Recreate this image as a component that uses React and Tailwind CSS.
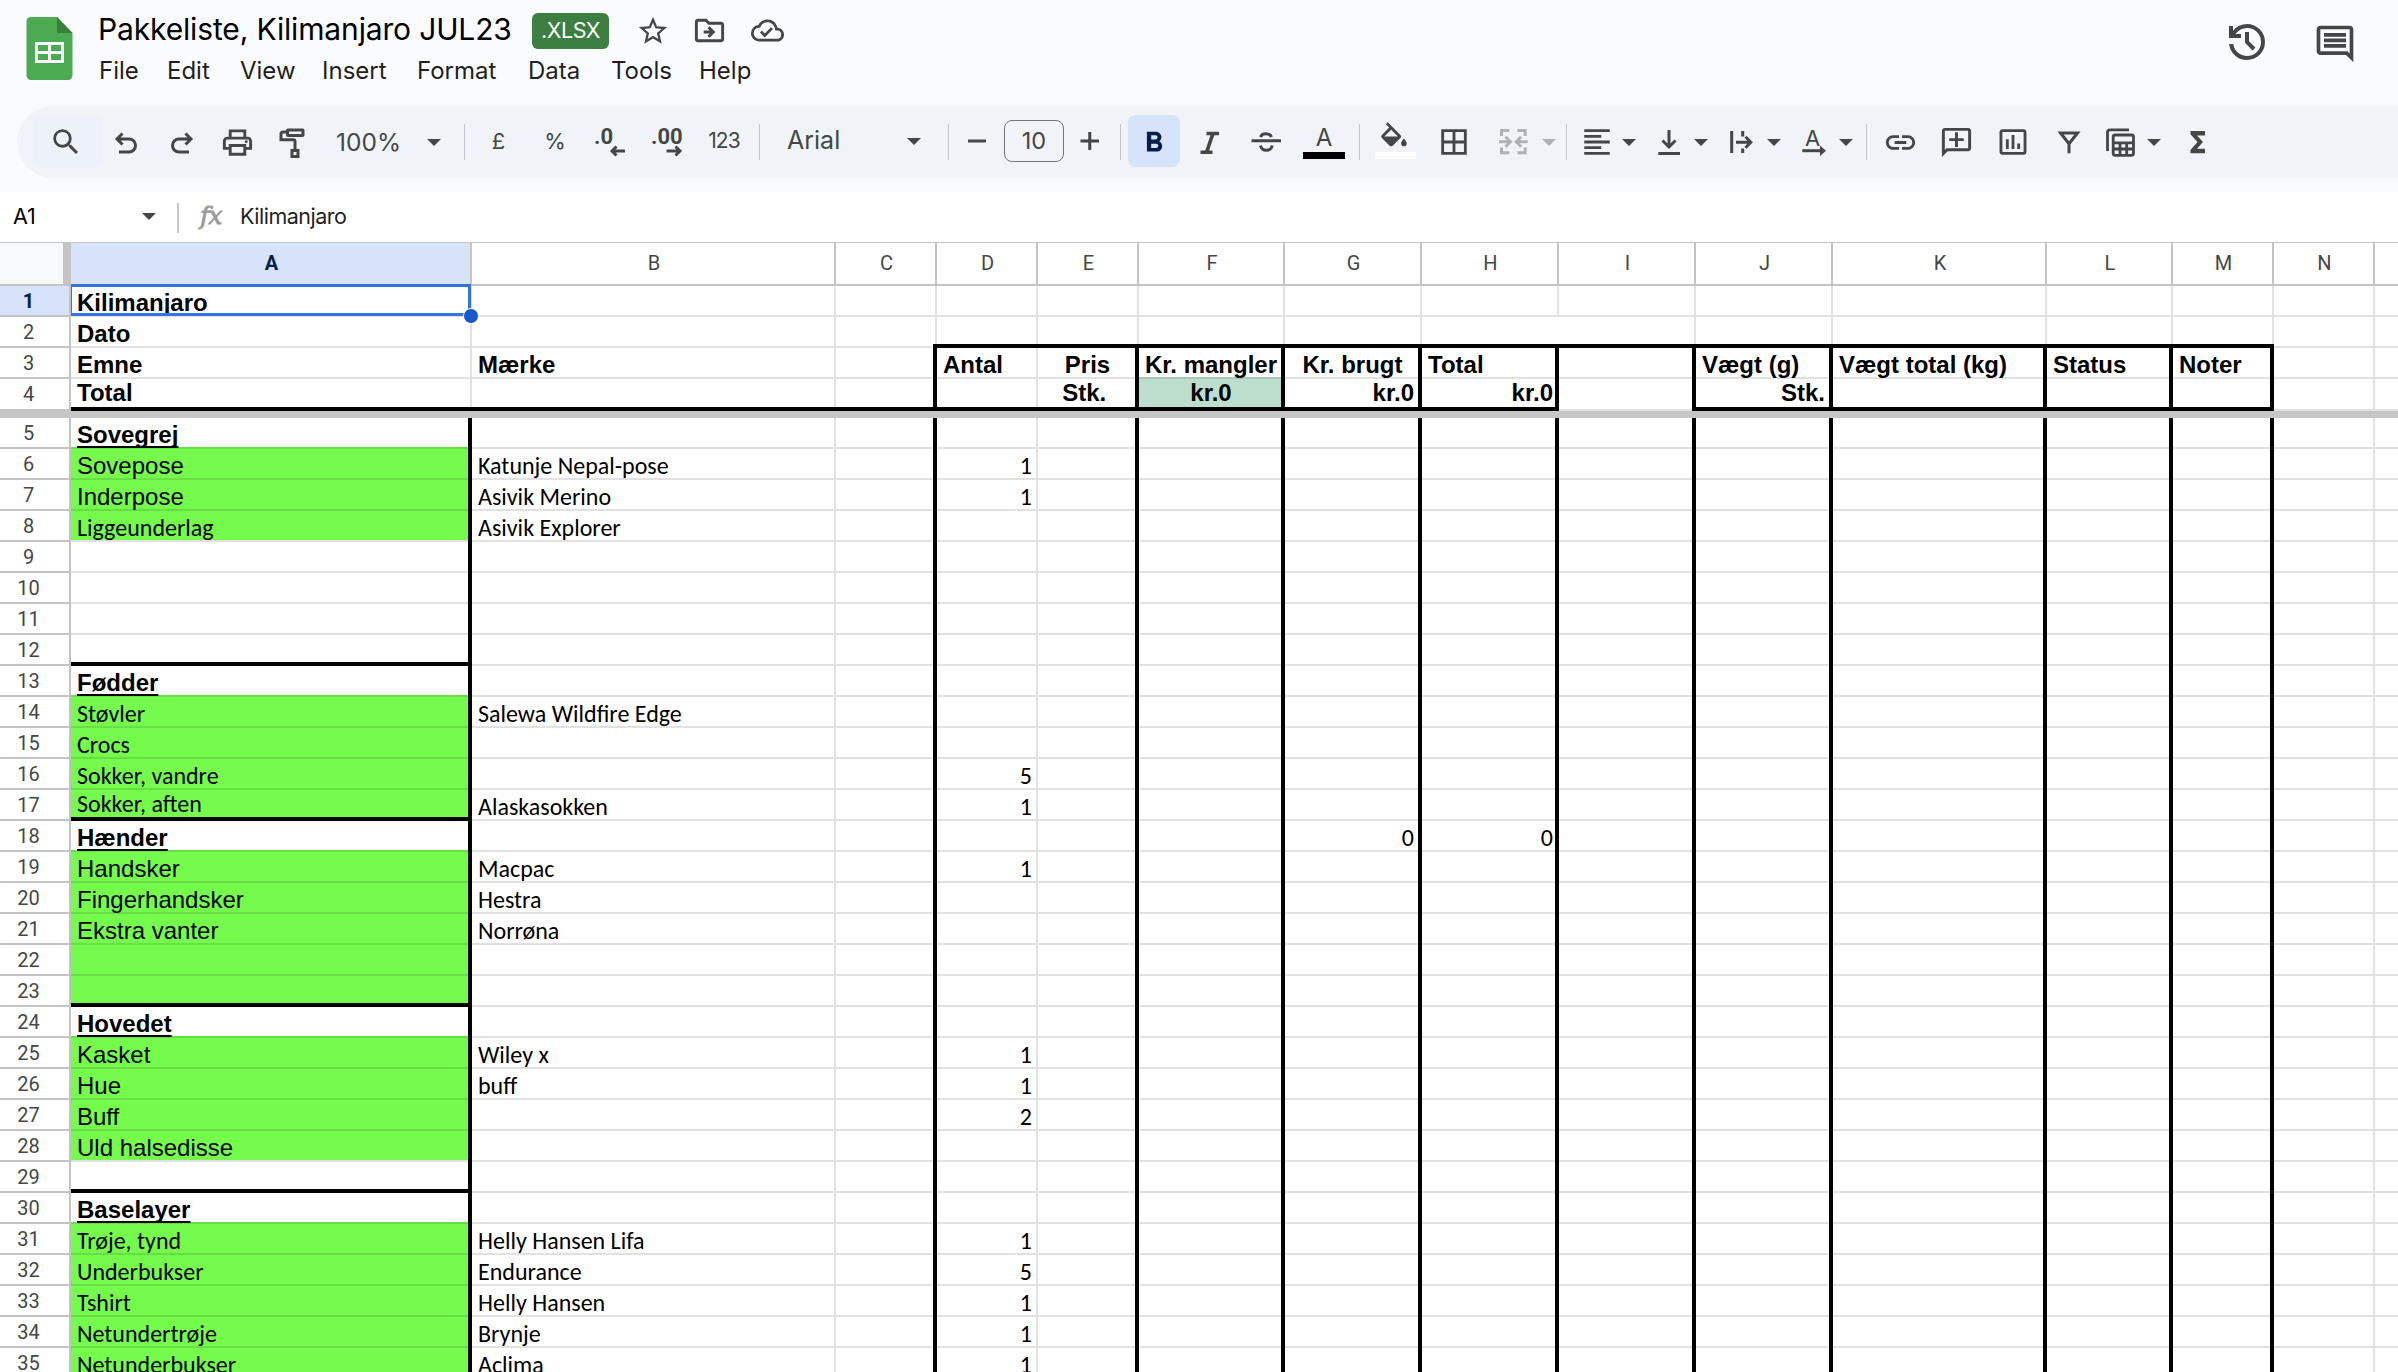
import clsx from 'clsx';
import {
  MdBorderAll, MdFormatAlignLeft, MdFormatBold, MdInsertChartOutlined, MdLink, MdOutlineAddComment,
  MdOutlineCloudDone, MdOutlineComment, MdOutlineDriveFileMove, MdOutlinePrint, MdSearch, MdStarBorder,
} from 'react-icons/md';

const COLUMNS = [
  { id: 'A', width: 401 },
  { id: 'B', width: 364 },
  { id: 'C', width: 101 },
  { id: 'D', width: 101 },
  { id: 'E', width: 101 },
  { id: 'F', width: 146 },
  { id: 'G', width: 137 },
  { id: 'H', width: 137 },
  { id: 'I', width: 137 },
  { id: 'J', width: 137 },
  { id: 'K', width: 214 },
  { id: 'L', width: 126 },
  { id: 'M', width: 101 },
  { id: 'N', width: 101 },
  { id: '', width: 101 },
];

const MENUS = [
  { name: 'File', width: 68 },
  { name: 'Edit', width: 73 },
  { name: 'View', width: 82 },
  { name: 'Insert', width: 95 },
  { name: 'Format', width: 111 },
  { name: 'Data', width: 83 },
  { name: 'Tools', width: 88 },
  { name: 'Help', width: 60 },
];

const bold = (text, align) => ({ text, align, bold: true });
const head = text => ({ text, bold: true, underline: true });
const arial = text => ({ text, fill: 'green' });
const calibri = text => ({ text, fill: 'green', calibri: true });
const brand = text => ({ text, calibri: true });
const num = n => ({ text: String(n), align: 'right', calibri: true });
const green = { fill: 'green' };

const ROWS = [
  { A: bold('Kilimanjaro') },
  { A: bold('Dato') },
  {
    A: bold('Emne'), B: bold('Mærke'), D: bold('Antal'), E: bold('Pris', 'center'), F: bold('Kr. mangler', 'center'),
    G: bold('Kr. brugt', 'center'), H: bold('Total'), J: bold('Vægt (g)'), K: bold('Vægt total (kg)'), L: bold('Status'), M: bold('Noter'),
  },
  {
    A: bold('Total'), E: bold('Stk. ', 'center'), F: { ...bold('kr.0', 'center'), fill: 'mint' },
    G: bold('kr.0', 'right'), H: bold('kr.0', 'right'), J: bold('Stk.', 'right'),
  },
  { A: head('Sovegrej') },
  { A: arial('Sovepose'), B: brand('Katunje Nepal-pose'), D: num(1) },
  { A: arial('Inderpose'), B: brand('Asivik Merino'), D: num(1) },
  { A: calibri('Liggeunderlag'), B: brand('Asivik Explorer') },
  {},
  {},
  {},
  {},
  { A: head('Fødder') },
  { A: calibri('Støvler'), B: brand('Salewa Wildfire Edge') },
  { A: calibri('Crocs') },
  { A: calibri('Sokker, vandre'), D: num(5) },
  { A: calibri('Sokker, aften'), B: brand('Alaskasokken'), D: num(1) },
  { A: head('Hænder'), G: num(0), H: num(0) },
  { A: arial('Handsker'), B: brand('Macpac'), D: num(1) },
  { A: arial('Fingerhandsker'), B: brand('Hestra') },
  { A: arial('Ekstra vanter'), B: brand('Norrøna') },
  { A: green },
  { A: green },
  { A: head('Hovedet') },
  { A: arial('Kasket'), B: brand('Wiley x'), D: num(1) },
  { A: arial('Hue'), B: brand('buff'), D: num(1) },
  { A: arial('Buff'), D: num(2) },
  { A: arial('Uld halsedisse') },
  {},
  { A: head('Baselayer') },
  { A: calibri('Trøje, tynd'), B: brand('Helly Hansen Lifa'), D: num(1) },
  { A: calibri('Underbukser'), B: brand('Endurance'), D: num(5) },
  { A: calibri('Tshirt'), B: brand('Helly Hansen'), D: num(1) },
  { A: calibri('Netundertrøje'), B: brand('Brynje'), D: num(1) },
  { A: calibri('Netunderbukser'), B: brand('Aclima'), D: num(1) },
];

const FILLS = { green: 'bg-[#75fb4c]', mint: 'bg-[#bddecd]' };
const LINES = { green: 'border-[#69dd45]', mint: 'border-[#a8c7b7]' };

const thickRight = (col, row) =>
  ('CEFGHIJKLM'.includes(col) && row >= 3) || (col === 'A' && row >= 5);

const thickBottom = (col, row) => {
  if (row === 2) return 'DEFGHIJKLM'.includes(col);
  if (row === 4) return 'ABCDEFGHJKLM'.includes(col);
  return col === 'A' && [12, 17, 23, 29].includes(row);
};

function Cell({ col, row }) {
  const cell = ROWS[row - 1][col.id] || {};
  const below = ROWS[row]?.[col.id];
  const named = col.id !== '';
  const right = named && thickRight(col.id, row);
  const bottom = named && thickBottom(col.id, row);
  // H2 runs into I2 without a divider
  const rightLine = right ? 'border-r-4 border-black' : col.id === 'H' && row === 2 ? '' : 'border-r-2 border-[#e1e1e1]';
  const bottomLine = bottom ? 'border-b-4 border-black' : clsx('border-b-2', LINES[below?.fill] || 'border-[#e1e1e1]');

  return (
    <div className={clsx('relative flex-none', bottom ? bottomLine : rightLine)} style={{ width: col.width }}>
      <div
        className={clsx(
          'flex h-full items-baseline whitespace-pre pl-[6px] text-[24px] leading-none text-black before:w-0 before:content-[""]',
          col.id === 'H' ? 'pr-[2px]' : 'pr-1',
          bottom ? rightLine : bottomLine,
          bottom ? 'before:h-[22px]' : 'before:h-[25px]',
          FILLS[cell.fill],
          cell.calibri ? 'font-[Carlito,Lato,sans-serif]' : 'font-["Liberation_Sans",Arial,sans-serif]',
          cell.bold && 'font-bold',
          cell.align === 'right' && 'justify-end',
          cell.align === 'center' && 'justify-center',
        )}
      >
        <span className={cell.underline ? 'underline decoration-2 underline-offset-[3px] [text-decoration-skip-ink:none]' : ''}>
          {cell.text}
        </span>
      </div>
      {col.id === 'C' && row === 2 && <div className="absolute -right-[2px] bottom-0 h-1 w-1 bg-black" />}
      {col.id === 'A' && row === 1 && (
        <>
          <div className="absolute -top-[2px] left-0 h-[32px] w-[400px] border-[3px] border-l border-[#3573de]" />
          <div className="absolute left-[392px] top-[22px] z-10 h-4 w-4 rounded-full border border-white bg-[#1b58cc]" />
        </>
      )}
    </div>
  );
}

function Row({ row }) {
  return (
    <div className={clsx('flex', row === 4 ? 'h-8' : 'h-[31px]')}>
      <div
        className={clsx(
          'flex w-[71px] flex-none items-baseline border-b-2 border-r-2 border-[#c4c4c4] font-[Roboto,sans-serif] text-[20px] leading-none before:h-[22px] before:w-0 before:content-[""]',
          row === 1 ? 'bg-[#d7e2fb] font-bold text-[#041e49]' : 'text-[#444746]',
        )}
      >
        <span className="w-[57px] text-center">{row}</span>
      </div>
      {COLUMNS.map(col => <Cell key={col.id} col={col} row={row} />)}
    </div>
  );
}

function Icon({ className, children, width = 36, stroke = 3 }) {
  return (
    <svg
      className={clsx('h-9 flex-none', className)}
      width={width}
      viewBox={`0 0 ${width} 36`}
      fill="none"
      stroke="currentColor"
      strokeWidth={stroke}
    >
      {children}
    </svg>
  );
}

function Caret({ className }) {
  return (
    <svg className={clsx('h-[7px] w-[14px] flex-none', className)} viewBox="0 0 14 7" fill="currentColor">
      <path d="M0 0h14L7 7z" />
    </svg>
  );
}

const Divider = ({ className }) => <div className={clsx('h-9 w-px flex-none bg-[#c7c7c7]', className)} />;

const TEXT = 'flex h-[72px] flex-none items-baseline leading-none before:w-0 before:content-[""]';

function Toolbar() {
  return (
    <div className="ml-[17px] flex h-[72px] items-center rounded-l-full bg-[#f0f4f9] text-[#444746]">
      <div className="ml-4 flex h-[50px] w-[69px] flex-none items-center rounded bg-[#edf2fa] pl-4">
        <MdSearch className="h-[34px] w-[34px]" />
      </div>
      <Icon className="ml-1.5">
        <path d="M14.5 9.5 9 15l5.5 5.5M9.5 15H21a6.5 6.5 0 0 1 0 13H11" />
      </Icon>
      <Icon className="ml-5">
        <path d="M21.5 9.5 27 15l-5.5 5.5M26.5 15H15a6.5 6.5 0 0 0 0 13h10" />
      </Icon>
      <MdOutlinePrint className="ml-5 h-[35px] w-[35px] flex-none" />
      <Icon className="ml-[19px]">
        <rect x="13.5" y="6" width="15.5" height="5.5" rx=".5" />
        <path d="M13.5 8H9a2 2 0 0 0-2 2v5.7h12.5a1.5 1.5 0 0 1 1.5 1.5V26" />
        <rect x="18" y="26.5" width="6" height="6" />
      </Icon>
      <div className={clsx(TEXT, 'ml-[26px] w-[69px] text-[24.5px] before:h-[45px]')}>100%</div>
      <Caret className="ml-[22px]" />

      <Divider className="ml-[23px]" />
      <div className={clsx(TEXT, 'ml-[5px] w-[57px] justify-center text-[22px] before:h-[43px]')}>£</div>
      <div className={clsx(TEXT, 'w-[56px] justify-center text-[22px] before:h-[43px]')}>%</div>
      <Icon className="ml-[9px]">
        <text x="2" y="20" fill="currentColor" stroke="none" className="font-[Roboto] text-[22px] font-bold">.0</text>
        <path d="M20 27h13M24.5 22.5 20 27l4.500 4.500" />
      </Icon>
      <Icon className="ml-[22px]">
        <text x="1" y="20" fill="currentColor" stroke="none" className="font-[Roboto] text-[22px] font-bold">.00</text>
        <path d="M16.5 27H30M25.5 22.5 30 27l-4.500 4.500" />
      </Icon>
      <div className={clsx(TEXT, 'ml-2.5 w-[56px] justify-center text-[21px] tracking-[-1px] before:h-[42px]')}>123</div>

      <Divider className="ml-[7px]" />
      <div className={clsx(TEXT, 'ml-[27px] w-[119px] text-[25px] before:h-[43px]')}>Arial</div>
      <Caret className="mb-0.5 ml-px" />

      <Divider className="ml-[27px]" />
      <Icon className="ml-[19px]" width={18}>
        <path d="M0 17h18" />
      </Icon>
      <div className="mb-0.5 ml-[18px] flex h-[42px] w-[60px] flex-none items-center justify-center rounded-[8px] border border-[#747775] text-[23.5px] leading-none">
        10
      </div>
      <Icon className="ml-4" width={20}>
        <path d="M.5 17H19M9.75 8v18" />
      </Icon>

      <Divider className="ml-5" />
      <div className="mb-0.5 ml-[7px] flex h-[52px] w-[52px] flex-none items-center justify-center rounded-[8px] bg-[#d7e2fb] text-[#041e49]">
        <MdFormatBold className="mt-[3px] h-[34px] w-[34px]" />
      </div>
      <Icon className="ml-3" stroke={3.6}>
        <path d="M14.5 9.5H27M8.5 28.3h12M21 9.5l-6.500 18.800" />
      </Icon>
      <Icon className="ml-5">
        <path d="M3.5 16.7H33M12.5 13a5.7 4.5 0 0 1 11 0M12.5 21.500a5.900 5.600 0 0 0 11.700 0" />
      </Icon>
      <div className="ml-[19px] h-[72px] w-[42px] flex-none">
        <div className="flex h-[46px] items-baseline justify-center text-[24px] leading-none before:h-[40px] before:w-0 before:content-['']">
          A
        </div>
        <div className="h-[7px] bg-black" />
      </div>

      <Divider className="ml-3.5" />
      <div className="ml-[15px] h-[72px] w-[41px] flex-none pt-4">
        <svg className="ml-0.5 h-[26px] w-[34px]" viewBox="0 0 24 18" fill="currentColor">
          <path d="M16.56 8.94 7.62 0 6.21 1.41l2.38 2.38-5.15 5.15a1.49 1.49 0 0 0 0 2.12l5.5 5.5c.29.29.68.44 1.06.44s.77-.15 1.06-.44l5.5-5.5c.59-.58.59-1.53 0-2.12zM5.21 10 10 5.21 14.79 10zM19 11.5s-2 2.17-2 3.5a2 2 0 1 0 4 0c0-1.330-2-3.500-2-3.500z" />
        </svg>
        <div className="mt-1 h-[7px] bg-white" />
      </div>
      <MdBorderAll className="ml-[21px] h-[34px] w-[34px] flex-none" />
      <Icon className="ml-6 text-[#b0b3b6]">
        <path d="M14.3 6.5H6.500V12M22.500 6.500h7.700V12M14.300 28.800H6.500v-5.300M22.500 28.800h7.700v-5.300M4 17.700h11M10.500 12.700l5 5-5 5M32.700 17.700h-11M26.200 12.700l-5 5 5 5" />
      </Icon>
      <Caret className="ml-[11px] text-[#b0b3b6]" />

      <Divider className="ml-2.5" />
      <MdFormatAlignLeft className="ml-[13px] h-[34px] w-[34px] flex-none" />
      <Caret className="ml-2" />
      <Icon className="ml-[15px]">
        <path d="M18 6v17M11.500 16.500l6.500 6.500 6.500-6.500M7.300 29.500H29" />
      </Icon>
      <Caret className="ml-[7px]" />
      <Icon className="ml-[15px]">
        <path d="M8.700 7v22M19.700 7v5.500M19.700 24.500V29M13 18.300h14.500M22.500 12.800l5.300 5.500-5.300 5.500" />
      </Icon>
      <Caret className="ml-2" />
      <Icon className="ml-[15px]">
        <text x="9" y="22" fill="currentColor" stroke="none" className="text-[22px]">A</text>
        <path d="M6.300 26.700H25" />
        <path d="m24 21.500 6 5.200-6 5.200z" fill="currentColor" stroke="none" />
      </Icon>
      <Caret className="ml-[7px]" />

      <Divider className="ml-[13px]" />
      <MdLink className="ml-4 h-[35px] w-[35px] flex-none" />
      <MdOutlineAddComment className="ml-[21px] h-[35px] w-[35px] flex-none -scale-x-100" />
      <MdInsertChartOutlined className="ml-[22px] h-[34px] w-[34px] flex-none" />
      <Icon className="ml-[21px]">
        <path d="M9.500 9h17L18 19.800zM18 19v10.300" />
      </Icon>
      <Icon className="ml-[15px]" stroke={2.8}>
        <path d="M27 5.800H8a2.500 2.500 0 0 0-2.500 2.500V27" />
        <rect x="11.2" y="11" width="20.3" height="20.3" rx="2" />
        <path d="M11 18.800h20M11 25h20M18 18.800V31M24.700 18.800V31" />
      </Icon>
      <Caret className="ml-[9px]" />
      <Icon className="ml-[19px]">
        <path d="M10.500 7H25v4.500h-8l6 6.600-6 6.700h8v4.500H10.500V26l7-7.900-7-7.800z" fill="currentColor" stroke="none" />
      </Icon>
    </div>
  );
}

function SheetsLogo() {
  return (
    <svg className="ml-[26px] mt-[17px] h-[63px] w-[47px] flex-none" viewBox="0 0 47 63">
      <path d="M4.500 0H31l15.500 16v42.500a4.500 4.500 0 0 1-4.500 4.500H5a4.500 4.500 0 0 1-4.500-4.500v-54A4.500 4.500 0 0 1 4.500 0z" fill="#4caa53" />
      <path d="M31 0l15.500 16H31z" fill="#37813b" />
      <path d="M9 25h29v21H9zm3 3v6h10v-6zm13 0v6h10v-6zM12 37v6h10v-6zm13 0v6h10v-6z" fill="#fff" fillRule="evenodd" />
    </svg>
  );
}

function Header() {
  return (
    <div className="flex h-[106px] text-[#444746]">
      <SheetsLogo />
      <div className="ml-[25px]">
        <div className="flex h-[58px]">
          <div className="flex w-[434px] items-baseline whitespace-nowrap text-[30px] leading-none tracking-[-0.15px] text-black before:h-10 before:w-0 before:content-['']">
            Pakkeliste, Kilimanjaro JUL23
          </div>
          <div className="mt-[13px] flex h-9 w-[77px] items-center justify-center rounded-[6px] bg-[#3d7f40] text-[21.5px] leading-none tracking-[-0.5px] text-white">
            .XLSX
          </div>
          <MdStarBorder className="ml-[27px] mt-[14px] h-[34px] w-[34px]" />
          <MdOutlineDriveFileMove className="ml-[22px] mt-[13px] h-[35px] w-[35px]" />
          <MdOutlineCloudDone className="ml-[24px] mt-[14px] h-[33px] w-[33px]" />
        </div>
        <div className="ml-px flex items-baseline text-[24px] leading-none text-[#1f1f1f] before:h-[21px] before:w-0 before:content-['']">
          {MENUS.map(menu => (
            <span key={menu.name} style={{ width: menu.width }}>{menu.name}</span>
          ))}
        </div>
      </div>
      <div className="ml-auto mr-[41px] flex">
        <svg className="mt-[18px] h-12 w-12" viewBox="0 0 24 24" fill="currentColor">
          <path d="M12 21q-3.450 0-6.013-2.288T3.050 13H5.100q.35 2.600 2.313 4.300T12 19q2.925 0 4.963-2.037T19 12t-2.037-4.963T12 5q-1.725 0-3.225.8T6.250 8H9v2H3V4h2v2.350q1.275-1.600 3.113-2.475T12 3q1.875 0 3.513.713t2.850 1.924 1.925 2.850T21 12t-.712 3.513-1.925 2.850-2.850 1.925T12 21m2.800-4.800L11 12.400V7h2v4.600l3.200 3.200z" />
        </svg>
        <MdOutlineComment className="ml-[42px] mt-[22px] h-[44px] w-[44px]" />
      </div>
    </div>
  );
}

function FormulaBar() {
  return (
    <div className="flex h-[51px] items-start border-b border-[#c4c4c4] bg-white text-[21.5px] leading-none text-black">
      <div className="ml-[13px] flex w-[129px] items-baseline before:h-8 before:w-0 before:content-['']">A1</div>
      <Caret className="mt-[21px] text-[#444746]" />
      <div className="ml-[21px] mt-[11px] h-[30px] w-0.5 bg-[#c7c7c7]" />
      <div className="ml-[21px] flex w-[40px] items-baseline font-['DejaVu_Serif',serif] text-[25px] italic tracking-[-1px] text-[#9a9a9a] [-webkit-text-stroke:0.8px_#9a9a9a] before:h-8 before:w-0 before:content-['']">
        fx
      </div>
      <div className="flex items-baseline tracking-[-0.5px] text-[#1f1f1f] before:h-8 before:w-0 before:content-['']">Kilimanjaro</div>
    </div>
  );
}

function ColumnHeaders() {
  return (
    <div className="flex h-[43px] bg-white">
      <div className="w-[71px] flex-none border-b-2 border-r-8 border-[#c4c4c4] bg-[#f8f9fa]" />
      {COLUMNS.map(col => (
        <div
          key={col.id}
          style={{ width: col.width }}
          className={clsx(
            'flex flex-none items-baseline justify-center border-b-2 border-r-2 border-[#c4c4c4] pl-0.5 font-[Roboto,sans-serif] text-[20px] leading-none before:h-[27px] before:w-0 before:content-[""]',
            col.id === 'A' ? 'bg-[#d7e2fb] font-bold text-[#041e49]' : 'text-[#444746]',
          )}
        >
          {col.id}
        </div>
      ))}
    </div>
  );
}

export default function App() {
  return (
    <div className="h-[1372px] w-[2398px] overflow-hidden bg-white font-[Inter,sans-serif]">
      <div className="h-[192px] bg-[#f9fbfe]">
        <Header />
        <Toolbar />
      </div>
      <FormulaBar />
      <ColumnHeaders />
      {ROWS.slice(0, 4).map((_, i) => <Row key={i} row={i + 1} />)}
      {/* frozen rows end here */}
      <div className="h-[7px] bg-[#c6c6c6]" />
      {ROWS.slice(4).map((_, i) => <Row key={i} row={i + 5} />)}
    </div>
  );
}
